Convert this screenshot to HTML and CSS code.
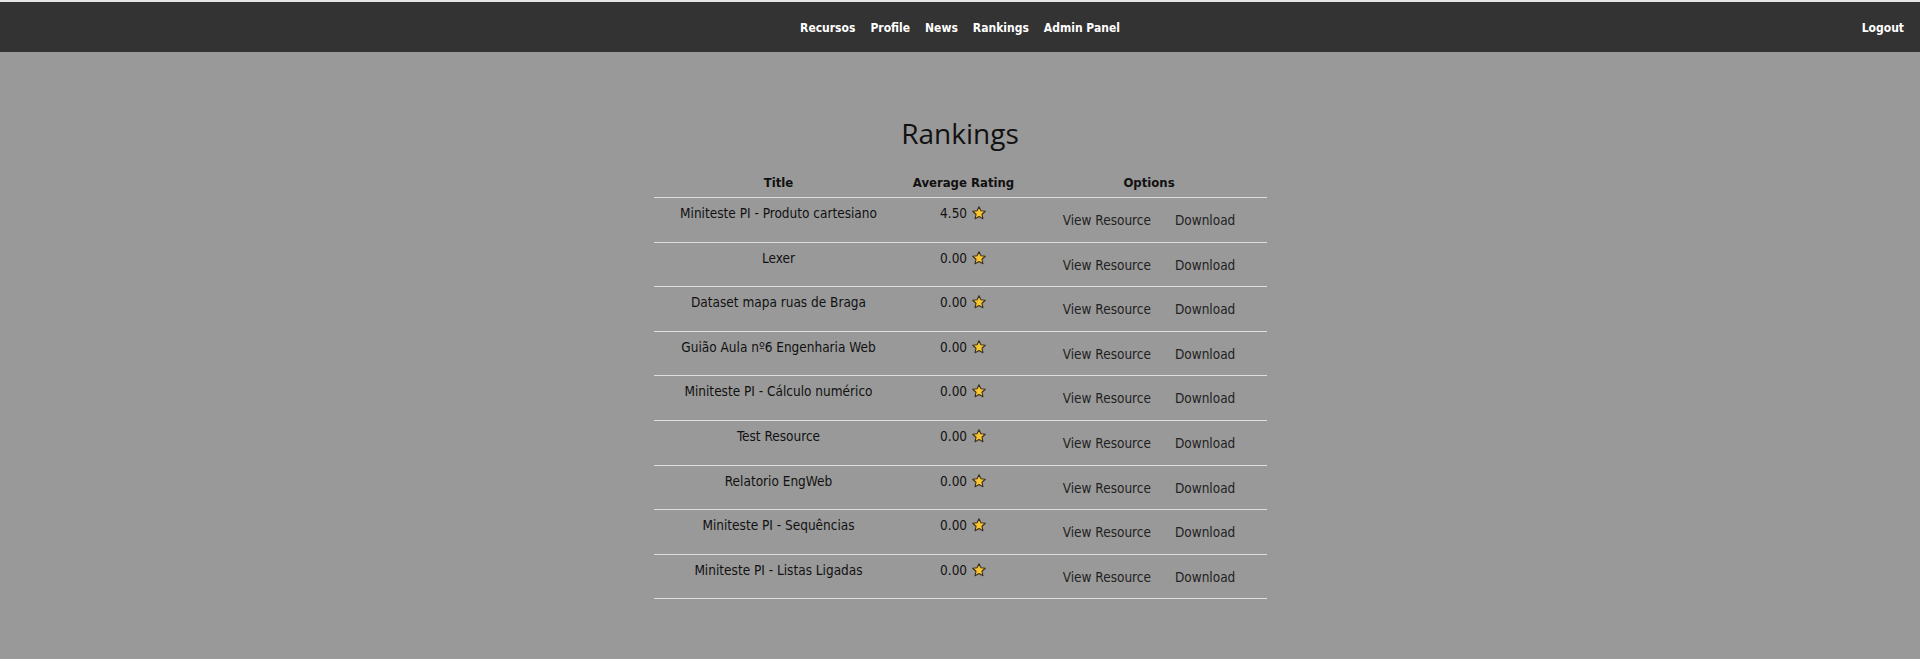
FILE: index.html
```html
<!DOCTYPE html>
<html lang="pt">
<head>
<meta charset="utf-8">
<title>Rankings</title>
<link rel="stylesheet" href="styles.css">
</head>
<body>
<nav class="topbar">
  <div class="topbar-spacer"></div>
  <ul class="nav-links">
    <li><a href="#">Recursos</a></li>
    <li><a href="#">Profile</a></li>
    <li><a href="#">News</a></li>
    <li><a href="#">Rankings</a></li>
    <li><a href="#">Admin Panel</a></li>
  </ul>
  <div class="topbar-right"><a href="#">Logout</a></div>
</nav>

<main class="content">
  <h1 class="page-title">Rankings</h1>
  <table class="rankings">
    <colgroup>
      <col class="col-title">
      <col class="col-rating">
      <col class="col-options">
    </colgroup>
    <thead>
      <tr><th>Title</th><th>Average Rating</th><th class="options-head">Options</th></tr>
    </thead>
    <tbody>
      <tr><td>Miniteste PI - Produto cartesiano</td><td class="rating">4.50 <svg class="star" viewBox="0 0 24 24"><path d="M12 2.5l2.9 6.2 6.6.7-5 4.5 1.4 6.6L12 17.2l-5.9 3.3 1.4-6.6-5-4.5 6.6-.7z"/></svg></td><td class="options"><a href="#">View Resource</a><a href="#">Download</a></td></tr>
      <tr><td>Lexer</td><td class="rating">0.00 <svg class="star" viewBox="0 0 24 24"><path d="M12 2.5l2.9 6.2 6.6.7-5 4.5 1.4 6.6L12 17.2l-5.9 3.3 1.4-6.6-5-4.5 6.6-.7z"/></svg></td><td class="options"><a href="#">View Resource</a><a href="#">Download</a></td></tr>
      <tr><td>Dataset mapa ruas de Braga</td><td class="rating">0.00 <svg class="star" viewBox="0 0 24 24"><path d="M12 2.5l2.9 6.2 6.6.7-5 4.5 1.4 6.6L12 17.2l-5.9 3.3 1.4-6.6-5-4.5 6.6-.7z"/></svg></td><td class="options"><a href="#">View Resource</a><a href="#">Download</a></td></tr>
      <tr><td>Guião Aula nº6 Engenharia Web</td><td class="rating">0.00 <svg class="star" viewBox="0 0 24 24"><path d="M12 2.5l2.9 6.2 6.6.7-5 4.5 1.4 6.6L12 17.2l-5.9 3.3 1.4-6.6-5-4.5 6.6-.7z"/></svg></td><td class="options"><a href="#">View Resource</a><a href="#">Download</a></td></tr>
      <tr><td>Miniteste PI - Cálculo numérico</td><td class="rating">0.00 <svg class="star" viewBox="0 0 24 24"><path d="M12 2.5l2.9 6.2 6.6.7-5 4.5 1.4 6.6L12 17.2l-5.9 3.3 1.4-6.6-5-4.5 6.6-.7z"/></svg></td><td class="options"><a href="#">View Resource</a><a href="#">Download</a></td></tr>
      <tr><td>Test Resource</td><td class="rating">0.00 <svg class="star" viewBox="0 0 24 24"><path d="M12 2.5l2.9 6.2 6.6.7-5 4.5 1.4 6.6L12 17.2l-5.9 3.3 1.4-6.6-5-4.5 6.6-.7z"/></svg></td><td class="options"><a href="#">View Resource</a><a href="#">Download</a></td></tr>
      <tr><td>Relatorio EngWeb</td><td class="rating">0.00 <svg class="star" viewBox="0 0 24 24"><path d="M12 2.5l2.9 6.2 6.6.7-5 4.5 1.4 6.6L12 17.2l-5.9 3.3 1.4-6.6-5-4.5 6.6-.7z"/></svg></td><td class="options"><a href="#">View Resource</a><a href="#">Download</a></td></tr>
      <tr><td>Miniteste PI - Sequências</td><td class="rating">0.00 <svg class="star" viewBox="0 0 24 24"><path d="M12 2.5l2.9 6.2 6.6.7-5 4.5 1.4 6.6L12 17.2l-5.9 3.3 1.4-6.6-5-4.5 6.6-.7z"/></svg></td><td class="options"><a href="#">View Resource</a><a href="#">Download</a></td></tr>
      <tr><td>Miniteste PI - Listas Ligadas</td><td class="rating">0.00 <svg class="star" viewBox="0 0 24 24"><path d="M12 2.5l2.9 6.2 6.6.7-5 4.5 1.4 6.6L12 17.2l-5.9 3.3 1.4-6.6-5-4.5 6.6-.7z"/></svg></td><td class="options"><a href="#">View Resource</a><a href="#">Download</a></td></tr>
    </tbody>
  </table>
</main>
</body>
</html>
```

FILE: styles.css
```css
* { box-sizing: border-box; }

html, body {
  margin: 0;
  padding: 0;
}

body {
  background: #999999;
  border-top: 2px solid #e6e6e6;
  font-family: "DejaVu Sans", Verdana, sans-serif;
  font-stretch: condensed;
  font-size: 13.5px;
  color: #111;
  min-height: 100vh;
}

.topbar {
  height: 50px;
  background: #333333;
  display: grid;
  grid-template-columns: 1fr auto 1fr;
  align-items: center;
}

.nav-links {
  list-style: none;
  margin: 0;
  padding: 0;
  display: flex;
  gap: 15px;
}

.nav-links a,
.topbar-right a {
  color: #ffffff;
  text-decoration: none;
  font-weight: bold;
  font-size: 12px;
  line-height: 14px;
}

.topbar-right {
  justify-self: end;
  padding-right: 16px;
}

.content {
  padding-top: 62px;
}

.page-title {
  text-align: center;
  font-family: "Open Sans", sans-serif;
  font-stretch: normal;
  font-weight: normal;
  font-size: 28px;
  line-height: 38px;
  margin: 0 0 12px;
  color: #111;
}

.rankings {
  width: 613px;
  margin: 0 auto;
  border-collapse: collapse;
  table-layout: fixed;
}

.col-title { width: 250px; }
.col-rating { width: 120px; }
.col-options { width: 243px; }

.rankings th {
  font-weight: bold;
  font-size: 13px;
  padding: 11px 8px 6px;
  line-height: 16px;
  border-bottom: 1px solid #dddddd;
  text-align: center;
  white-space: nowrap;
}

.rankings th.options-head {
  padding-left: 16px;
}

.rankings td {
  padding: 7px 8px 9px;
  line-height: 16px;
  border-bottom: 1px solid #dddddd;
  text-align: center;
  vertical-align: top;
}

.rating {
  white-space: nowrap;
}

.star {
  width: 16px;
  height: 16px;
  vertical-align: -3px;
  fill: #f7c534;
  stroke: #3a3020;
  stroke-width: 1.6;
  stroke-linejoin: round;
}

.rankings td.options {
  padding: 9px 0 7px 8px;
  white-space: nowrap;
  line-height: normal;
}

.options a {
  display: inline-block;
  padding: 6px 12px;
  color: #222;
  text-decoration: none;
  line-height: 15.6px;
}
```
